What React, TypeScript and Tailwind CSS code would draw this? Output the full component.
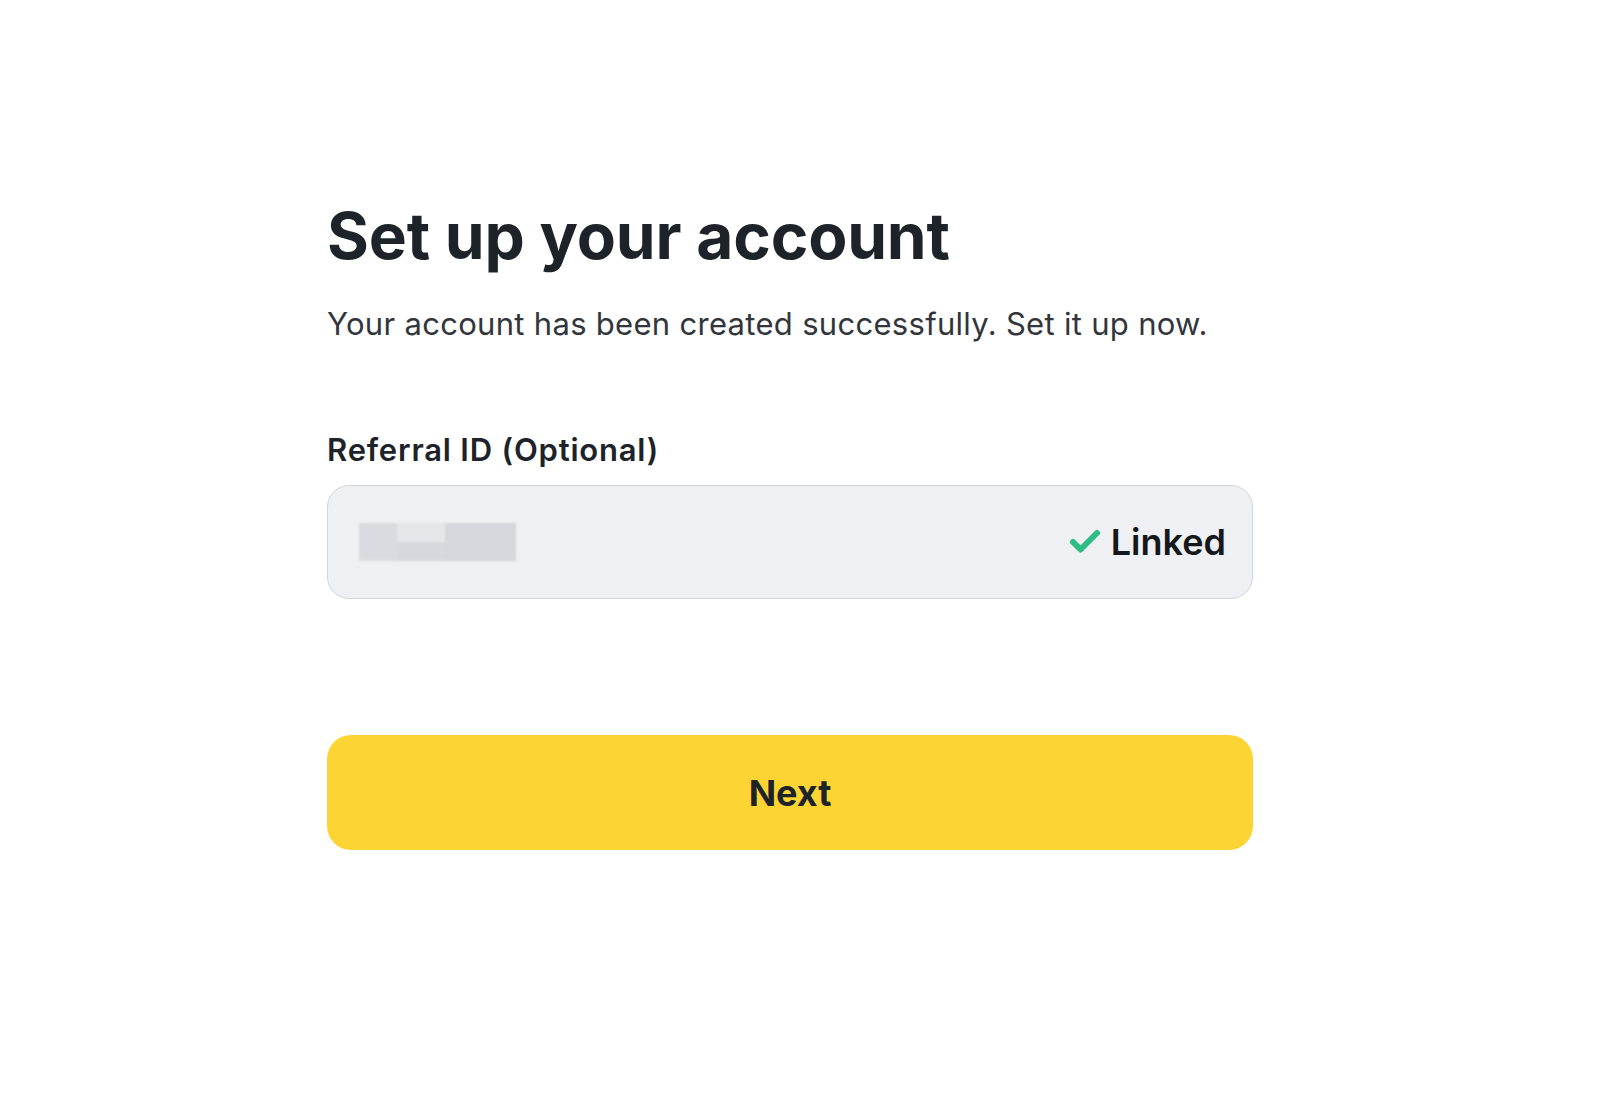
import { Check } from "lucide-react";

const SetupAccountPage = () => {
  return (
    <div className="min-h-screen w-full bg-white font-['Inter','Noto_Sans',sans-serif] text-[#1e2329]">
      <div className="flex flex-col pl-[327px] pt-[196px]">
        <div className="w-[926px]">
          <h1 className="text-[64px] font-bold leading-[80px] tracking-[-0.2px]">
            Set up your account
          </h1>
          <p className="mt-[28px] text-[31px] leading-[40px] tracking-[0.3px] text-[#32363c]">
            Your account has been created successfully. Set it up now.
          </p>

          <label className="mt-[86px] block text-[31px] font-semibold leading-[40px] tracking-[0.8px] text-[#1e2329]">
            Referral ID (Optional)
          </label>
          <div className="mt-[15px] flex h-[114px] items-center justify-between rounded-[22px] border border-[#d3d6db] bg-[#eef0f3] pl-[31px] pr-[26px]">
            <div className="flex h-[38px] w-[157px] blur-[1px]">
              <div className="h-full w-[38px] bg-[#d9dbe0]" />
              <div className="flex h-full w-[48px] flex-col">
                <div className="h-1/2 bg-[#e4e6ea]" />
                <div className="h-1/2 bg-[#d6d8de]" />
              </div>
              <div className="h-full flex-1 bg-[#d5d7dc]" />
            </div>
            <div className="flex items-center gap-[8px]">
              <Check className="h-[36px] w-[36px] text-[#2ebd85]" strokeWidth={4} />
              <span className="text-[36px] font-semibold leading-none text-[#14181d]">
                Linked
              </span>
            </div>
          </div>

          <button className="mt-[136px] flex h-[115px] w-full items-center justify-center rounded-[24px] bg-[#fcd535] text-[36px] font-bold text-[#1e2329]">
            Next
          </button>
        </div>
      </div>
    </div>
  );
};

export default SetupAccountPage;
